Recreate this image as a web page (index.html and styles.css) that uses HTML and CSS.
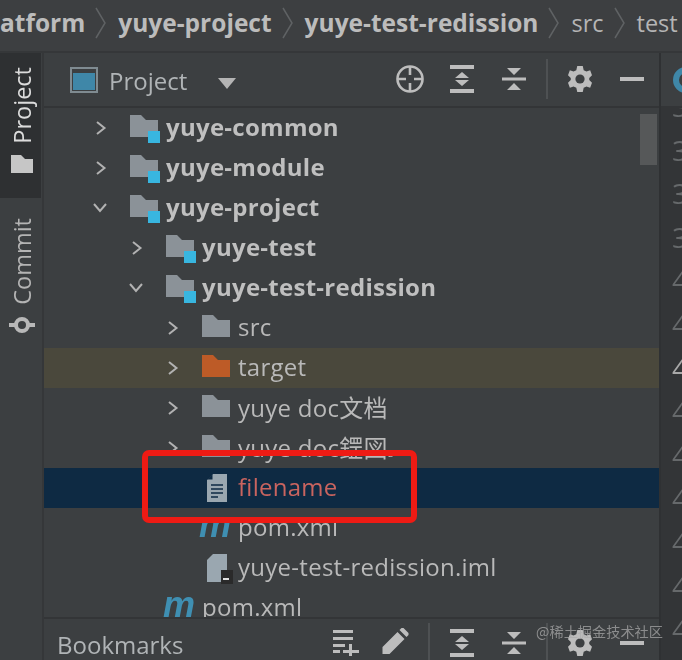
FILE: index.html
```html
<!DOCTYPE html>
<html lang="en">
<head>
<meta charset="utf-8">
<title>Project</title>
<link rel="stylesheet" href="styles.css">
</head>
<body>
<svg class="defs" width="0" height="0" aria-hidden="true">
  <defs>
    <symbol id="folder" viewBox="0 0 28 22"><path d="M0 0H11L16 5H28V22H0Z" fill="currentColor"/></symbol>
    <symbol id="chev-r" viewBox="0 0 12 16"><path d="M2 2L9.500 8L2 14" fill="none" stroke="#b2b2b2" stroke-width="2"/></symbol>
    <symbol id="chev-d" viewBox="0 0 16 12"><path d="M2 2L8 9L14 2" fill="none" stroke="#b2b2b2" stroke-width="2"/></symbol>
  </defs>
</svg>
<div class="app">
  <nav class="crumbs">
    <span class="crumb strong clip">atform</span><svg class="sep" viewBox="0 0 12 32"><path d="M1 1L10 16L1 31"/></svg>
    <span class="crumb strong">yuye-project</span><svg class="sep" viewBox="0 0 12 32"><path d="M1 1L10 16L1 31"/></svg>
    <span class="crumb strong">yuye-test-redission</span><svg class="sep" viewBox="0 0 12 32"><path d="M1 1L10 16L1 31"/></svg>
    <span class="crumb">src</span><svg class="sep" viewBox="0 0 12 32"><path d="M1 1L10 16L1 31"/></svg>
    <span class="crumb">test</span>
  </nav>
  <div class="main">
    <aside class="rail">
      <div class="rail-tab active">
        <span class="rail-text">Project</span>
        <svg class="rail-folder" viewBox="0 0 22 18"><path d="M0 0H10L14 4H22V18H0Z" fill="#c6c6c6"/></svg>
      </div>
      <div class="rail-tab">
        <span class="rail-text">Commit</span>
        <svg class="rail-commit" viewBox="0 0 26 18"><circle cx="13" cy="9" r="6" fill="none" stroke="#b8b8b8" stroke-width="4"/><path d="M0 9H7M19 9H26" stroke="#b8b8b8" stroke-width="4"/></svg>
      </div>
    </aside>
    <section class="panel">
      <header class="panel-head">
        <svg class="project-icon" viewBox="0 0 28 26"><rect x="1" y="1" width="26" height="24" fill="none" stroke="#7f8b91" stroke-width="2"/><rect x="3" y="6" width="22" height="17" fill="#3f87a8"/></svg>
        <span class="panel-title">Project</span>
        <svg class="caret" viewBox="0 0 18 11"><path d="M0 0H18L9 11Z" fill="#b4b4b4"/></svg>
        <span class="spring"></span>
        <svg class="tool locate" viewBox="0 0 28 28"><circle cx="14" cy="14" r="12.500" fill="none" stroke="#bdbdbd" stroke-width="2.600"/><path d="M14 1V10M14 18V27M1 14H10M18 14H27" stroke="#bdbdbd" stroke-width="2.600"/></svg>
        <svg class="tool expand" viewBox="0 0 24 28"><path d="M0 0H24V4H0ZM0 24H24V28H0ZM12 7L19 13H5ZM12 21L5 15H19Z" fill="#bdbdbd"/></svg>
        <svg class="tool collapse" viewBox="0 0 24 24"><path d="M0 10.500H24V13.500H0ZM5 1H19L12 8ZM12 16L19 23H5Z" fill="#bdbdbd"/></svg>
        <i class="divider"></i>
        <svg class="tool gear" viewBox="0 0 26 28"><path d="M10 0H16L17 4.500L20 6L24 4.500L26 10L23 13V15L26 18L24 23.500L20 22L17 23.500L16 28H10L9 23.500L6 22L2 23.500L0 18L3 15V13L0 10L2 4.500L6 6L9 4.500Z" fill="#bdbdbd"/><circle cx="13" cy="14" r="5" fill="#3c3f41"/></svg>
        <svg class="tool hide" viewBox="0 0 24 4"><rect width="24" height="4" fill="#bdbdbd"/></svg>
      </header>
      <div class="tree">
        <div class="scrollthumb"></div>
        <div class="row d1"><svg class="arrow"><use href="#chev-r"/></svg><span class="node mod"><svg class="fold"><use href="#folder"/></svg><i class="badge"></i></span><span class="label strong">yuye-common</span></div>
        <div class="row d1"><svg class="arrow"><use href="#chev-r"/></svg><span class="node mod"><svg class="fold"><use href="#folder"/></svg><i class="badge"></i></span><span class="label strong">yuye-module</span></div>
        <div class="row d1"><svg class="arrow down"><use href="#chev-d"/></svg><span class="node mod"><svg class="fold"><use href="#folder"/></svg><i class="badge"></i></span><span class="label strong">yuye-project</span></div>
        <div class="row d2"><svg class="arrow"><use href="#chev-r"/></svg><span class="node mod"><svg class="fold"><use href="#folder"/></svg><i class="badge"></i></span><span class="label strong">yuye-test</span></div>
        <div class="row d2"><svg class="arrow down"><use href="#chev-d"/></svg><span class="node mod"><svg class="fold"><use href="#folder"/></svg><i class="badge"></i></span><span class="label strong">yuye-test-redission</span></div>
        <div class="row d3"><svg class="arrow"><use href="#chev-r"/></svg><span class="node"><svg class="fold"><use href="#folder"/></svg></span><span class="label">src</span></div>
        <div class="row d3 excluded"><svg class="arrow"><use href="#chev-r"/></svg><span class="node orange"><svg class="fold"><use href="#folder"/></svg></span><span class="label">target</span></div>
        <div class="row d3"><svg class="arrow"><use href="#chev-r"/></svg><span class="node"><svg class="fold"><use href="#folder"/></svg></span><span class="label">yuye doc文档</span></div>
        <div class="row d3"><svg class="arrow"><use href="#chev-r"/></svg><span class="node"><svg class="fold"><use href="#folder"/></svg></span><span class="label">yuye doc鎠図<small>s</small></span></div>
        <div class="row d3 selected"><span class="arrow-gap"></span><span class="node"><svg class="file" viewBox="0 0 20 28"><path d="M6 0H20V28H0V6Z" fill="#9aa7b0"/><path d="M0 5.500L5.500 0V5.500Z" fill="#0e2a43"/><path d="M4 11H16M4 15H16M4 19H16M4 23H11" stroke="#0e2a43" stroke-width="1.600"/></svg></span><span class="label red">filename</span></div>
        <div class="row d3"><span class="arrow-gap"></span><span class="node"><span class="mvn">m</span></span><span class="label">pom.xml</span></div>
        <div class="row d3"><span class="arrow-gap"></span><span class="node"><svg class="file" viewBox="0 0 20 28"><path d="M6 0H20V28H0V6Z" fill="#9aa7b0"/><path d="M14 16H26V30H14Z" fill="#2a2a2a"/><rect x="16" y="24" width="6" height="2" fill="#e0e0e0"/></svg></span><span class="label">yuye-test-redission.iml</span></div>
        <div class="row d2"><span class="arrow-gap"></span><span class="node"><span class="mvn">m</span></span><span class="label">pom.xml</span></div>
      </div>
      <footer class="panel-foot">
        <span class="panel-title small">Bookmarks</span>
        <span class="spring"></span>
        <svg class="tool addlist" viewBox="0 0 26 26"><path d="M0 0H20V3H0ZM0 7H20V10H0ZM0 14H12V17H0ZM0 20H7V23H0ZM16 14H19V20H26V23H19V26H16V23H10V20H16Z" fill="#bdbdbd"/></svg>
        <svg class="tool pencil" viewBox="0 0 26 26"><path d="M0 26V19L15 4L22 11L7 26ZM17 2L19 0H21L26 5V7L24 9Z" fill="#bdbdbd"/></svg>
        <i class="divider"></i>
        <svg class="tool expand" viewBox="0 0 24 28"><path d="M0 0H24V4H0ZM0 24H24V28H0ZM12 7L19 13H5ZM12 21L5 15H19Z" fill="#bdbdbd"/></svg>
        <svg class="tool collapse" viewBox="0 0 24 24"><path d="M0 10.500H24V13.500H0ZM5 1H19L12 8ZM12 16L19 23H5Z" fill="#bdbdbd"/></svg>
        <i class="divider"></i>
        <svg class="tool gear" viewBox="0 0 26 28"><path d="M10 0H16L17 4.500L20 6L24 4.500L26 10L23 13V15L26 18L24 23.500L20 22L17 23.500L16 28H10L9 23.500L6 22L2 23.500L0 18L3 15V13L0 10L2 4.500L6 6L9 4.500Z" fill="#bdbdbd"/><circle cx="13" cy="14" r="5" fill="#3c3f41"/></svg>
        <svg class="tool hide" viewBox="0 0 24 4"><rect width="24" height="4" fill="#bdbdbd"/></svg>
      </footer>
      <div class="callout"></div>
      <div class="watermark">@稀土掘金技术社区</div>
    </section>
    <aside class="gutter">
      <div class="tab-strip"><span class="tab-dot"></span></div>
      <div class="lines">
        <span>3</span><span>3</span><span>3</span><span>3</span><span>4</span><span>4</span><span class="cur">4</span><span>4</span><span>4</span><span>4</span><span>4</span><span>4</span><span>4</span>
      </div>
    </aside>
  </div>
</div>
</body>
</html>
```
FILE: styles.css
```css
* { box-sizing: border-box; }
html, body { margin: 0; padding: 0; height: 660px; overflow: hidden; background: #3c3f41; }
body { font-family: "Open Sans", "Noto Sans", "Noto Sans CJK SC", sans-serif; color: #bbbbbb; }
.defs { position: absolute; }
.app { width: 682px; height: 660px; display: flex; flex-direction: column; overflow: hidden; filter: blur(.35px); }

.crumbs { height: 53px; flex: none; display: flex; align-items: center; white-space: nowrap; border-bottom: 2px solid #353739; padding-bottom: 5px; overflow: hidden; font-size: 23.500px; background: #3d3f41; }
.crumb { color: #b5b5b5; line-height: 30px; }
.crumb.strong { font-size: 24.500px; font-weight: 700; color: #bcbcbc; }
.sep { width: 12px; height: 32px; flex: none; margin: 0 11px 0 10px; fill: none; stroke: #5f6264; stroke-width: 1.500; }

.main { flex: 1; display: flex; min-height: 0; }

.rail { width: 44px; flex: none; background: #3c3f41; border-right: 2px solid #353739; }
.rail-tab { display: flex; flex-direction: column; align-items: center; }
.rail-tab.active { height: 145px; background: #2e3032; padding-top: 14px; margin-right: 1px; padding-left: 2px; }
.rail-text { writing-mode: vertical-rl; transform: rotate(180deg); font-size: 23.500px; line-height: 26px; }
.rail-tab.active .rail-text { color: #dcdcdc; }
.rail-folder { width: 22px; height: 18px; margin-top: 11px; }
.rail-tab:not(.active) { padding-top: 20px; padding-left: 2px; }
.rail-tab:not(.active) .rail-text { color: #b4b4b4; }
.rail-commit { width: 26px; height: 18px; margin-top: 11px; }

.panel { position: relative; width: 615px; flex: none; display: flex; flex-direction: column; min-height: 0; }
.panel-head { height: 55px; flex: none; display: flex; align-items: center; border-bottom: 2px solid #333537; padding: 0 0 2px 26px; }
.project-icon { width: 28px; height: 26px; flex: none; margin-top: 2px; }
.panel-title { font-size: 24px; color: #b0b4b6; margin-left: 11px; margin-top: 4px; }
.panel-title.small { margin-left: 13px; margin-top: 3px; }
.caret { width: 18px; height: 11px; margin-left: 31px; margin-top: 9px; flex: none; }
.spring { flex: 1; }

.tool { flex: none; }
.locate { width: 28px; height: 28px; margin-right: 26px; }
.expand { width: 24px; height: 28px; margin-right: 28px; }
.collapse { width: 24px; height: 24px; }
.divider { width: 2px; height: 40px; background: #4e5153; margin: 0 20px; flex: none; }
.gear { width: 24px; height: 28px; margin-right: 28px; }
.hide { width: 24px; height: 4px; margin-right: 15px; }

.tree { position: relative; flex: 1; min-height: 0; overflow: hidden; }
.scrollthumb { position: absolute; right: 2px; top: 6px; width: 17px; height: 51px; background: #565859; }
.row { height: 40px; display: flex; align-items: center; font-size: 24px; letter-spacing: .27px; white-space: nowrap; }
.d1 { padding-left: 50px; }
.d2 { padding-left: 86px; }
.d3 { padding-left: 122px; }
.arrow { width: 12px; height: 16px; flex: none; margin-left: 1px; margin-right: 23px; }
.arrow.down { width: 16px; height: 12px; margin-left: -2px; margin-right: 22px; }
.arrow-gap { width: 36px; flex: none; }
.node { position: relative; width: 36px; height: 26px; flex: none; display: block; color: #8b9298; }
.node.orange { color: #bd5b27; }
.fold { display: block; width: 28px; height: 22px; }
.badge { position: absolute; left: 18px; top: 16px; width: 12px; height: 12px; background: #38b6e0; }
.label { color: #b9b9b9; margin-top: -4px; }
.label small { font-size: 12px; }
.label.strong { font-weight: 700; color: #bfbfbf; }
.label.red { color: #c9645f; }
.excluded { background: #4a483c; }
.selected { background: #0e2a43; }
.file { display: block; width: 20px; height: 28px; overflow: visible; margin: -1px 0 0 5px; }
.mvn { display: block; width: 34px; font: italic 700 36px/20px "Liberation Sans", sans-serif; color: #3f8fb2; margin-left: -3px; letter-spacing: 0; }

.panel-foot { height: 43px; flex: none; display: flex; align-items: center; border-top: 2px solid #333537; background: #3c3f41; padding-top: 6px; position: relative; }
.addlist { width: 26px; height: 26px; margin-right: 23px; }
.pencil { width: 27px; height: 26px; margin-top: -4px; margin-right: -1px; }
.panel-foot .divider { height: 40px; }
.panel-foot .expand { height: 28px; }

.callout { position: absolute; left: 98px; top: 397px; width: 275px; height: 73px; border: 6px solid #ee1b14; border-radius: 7px; }
.watermark { position: absolute; right: -4px; top: 568px; font: 14.200px "Noto Sans CJK SC", sans-serif; color: rgba(170,170,170,.72); white-space: nowrap; }

.gutter { flex: 1; min-width: 0; background: #333537; display: flex; flex-direction: column; border-left: 2px solid #2f3133; overflow: hidden; }
.tab-strip { height: 55px; flex: none; background: #3c3f41; border-bottom: 2px solid #333537; position: relative; z-index: 1; }
.tab-dot { position: absolute; left: 12px; top: 14px; width: 26px; height: 26px; border: 6px solid #3f87a8; border-radius: 50%; }
.lines { display: flex; flex-direction: column; padding-left: 11px; margin-top: -23px; font-size: 28px; color: #66696b; }
.lines span { height: 43.600px; line-height: 43.600px; flex: none; }
.lines .cur { color: #a9a9a9; }
```
